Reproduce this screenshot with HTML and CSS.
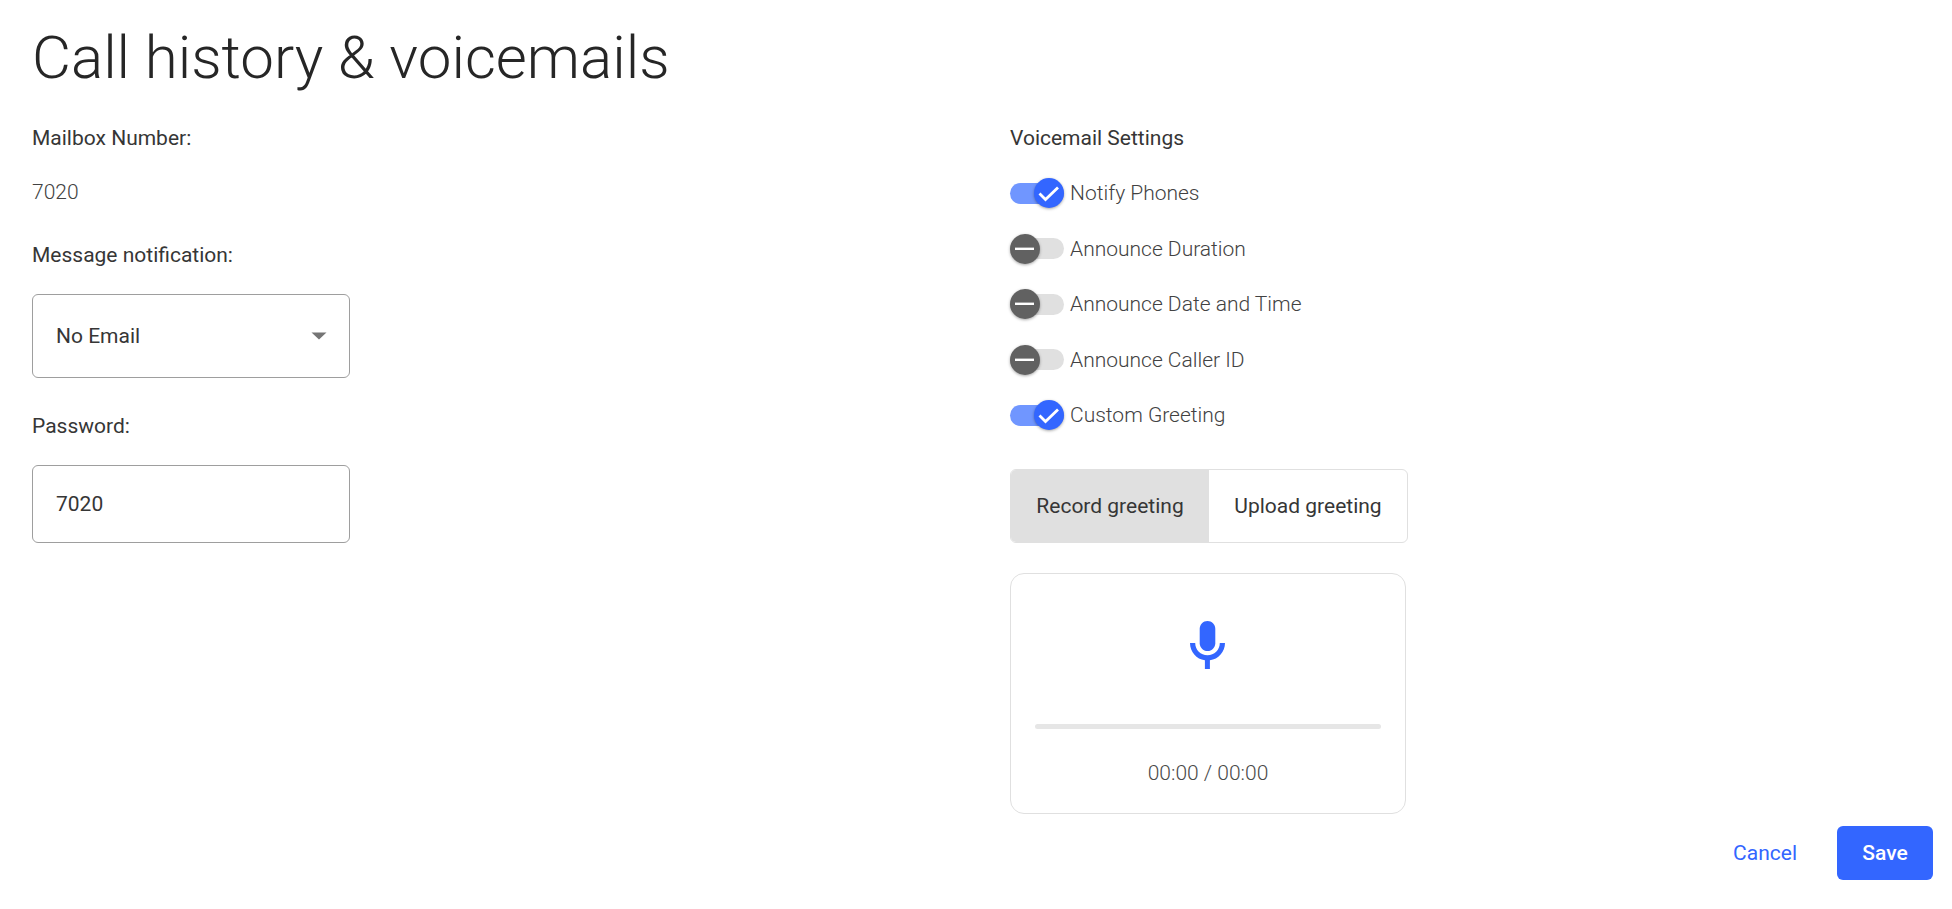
FILE: index.html
```html
<!DOCTYPE html>
<html lang="en">
<head>
<meta charset="utf-8">
<title>Call history &amp; voicemails</title>
<link rel="stylesheet" href="styles.css">
</head>
<body>
<main class="page">
  <h1 class="title">Call history &amp; voicemails</h1>
  <div class="columns">
    <section class="col-left">
      <div class="label">Mailbox Number:</div>
      <div class="static-value">7020</div>
      <div class="label label-notify">Message notification:</div>
      <div class="box box-select">
        <span>No Email</span>
        <svg class="caret" width="16" height="8" viewBox="0 0 16 8"><path d="M0.5 0.5H15.5L8 7.5Z" fill="#757575"/></svg>
      </div>
      <div class="label label-password">Password:</div>
      <div class="box box-input"><span>7020</span></div>
    </section>
    <section class="col-right">
      <div class="label">Voicemail Settings</div>
      <div class="toggles">
        <div class="toggle-row">
          <span class="switch on"><span class="thumb"><svg width="30" height="30" viewBox="0 0 30 30"><path d="M5.5 15.5L11.5 21.5L24 9.5" fill="none" stroke="#fff" stroke-width="2.8"/></svg></span></span>
          <span class="toggle-label">Notify Phones</span>
        </div>
        <div class="toggle-row">
          <span class="switch off"><span class="thumb"><svg width="30" height="30" viewBox="0 0 30 30"><path d="M5 14.8H24" fill="none" stroke="#fff" stroke-width="2.4"/></svg></span></span>
          <span class="toggle-label">Announce Duration</span>
        </div>
        <div class="toggle-row">
          <span class="switch off"><span class="thumb"><svg width="30" height="30" viewBox="0 0 30 30"><path d="M5 14.8H24" fill="none" stroke="#fff" stroke-width="2.4"/></svg></span></span>
          <span class="toggle-label">Announce Date and Time</span>
        </div>
        <div class="toggle-row">
          <span class="switch off"><span class="thumb"><svg width="30" height="30" viewBox="0 0 30 30"><path d="M5 14.8H24" fill="none" stroke="#fff" stroke-width="2.4"/></svg></span></span>
          <span class="toggle-label">Announce Caller ID</span>
        </div>
        <div class="toggle-row">
          <span class="switch on"><span class="thumb"><svg width="30" height="30" viewBox="0 0 30 30"><path d="M5.5 15.5L11.5 21.5L24 9.5" fill="none" stroke="#fff" stroke-width="2.8"/></svg></span></span>
          <span class="toggle-label">Custom Greeting</span>
        </div>
      </div>
      <div class="tabs">
        <div class="tab tab-active">Record greeting</div>
        <div class="tab tab-upload">Upload greeting</div>
      </div>
      <div class="recorder">
        <svg class="mic" width="35" height="48" viewBox="0 0 35 48"><path fill="#3366ff" d="M17.5 0C21.8 0 25.3 3.5 25.3 7.8V22.2C25.3 26.5 21.8 30 17.5 30C13.2 30 9.7 26.5 9.7 22.2V7.8C9.7 3.5 13.2 0 17.5 0Z"/><path fill="#3366ff" d="M0 22H5.2C5.2 28.8 10.7 34.3 17.5 34.3C24.3 34.3 29.8 28.8 29.8 22H35C35 30.9 28.3 38.2 19.9 39.3V48H14.9V39.3C6.5 38.2 0 30.9 0 22Z"/></svg>
        <div class="track"></div>
        <div class="time">00:00 / 00:00</div>
      </div>
    </section>
  </div>
  <footer class="actions">
    <span class="cancel">Cancel</span>
    <span class="save">Save</span>
  </footer>
</main>
</body>
</html>
```

FILE: styles.css
```css
* { box-sizing: border-box; }
html, body { margin: 0; padding: 0; background: #fff; }
body { font-family: Roboto, "Liberation Sans", sans-serif; color: #212121; overflow: hidden; }
.page { width: 1952px; height: 909px; display: flex; flex-direction: column; }
.title {
  margin: 0; padding: 22px 0 0 32px; height: 126px;
  font-size: 60px; line-height: 72px; font-weight: 300; color: #262626;
}
.columns { display: grid; grid-template-columns: 1010px 1fr; }
.col-left { padding-left: 32px; }
.col-right { width: 400px; }
.label { font-size: 21px; line-height: 24px; font-weight: 400; color: #363636; }
.static-value { margin-top: 30px; font-size: 21px; line-height: 24px; font-weight: 300; color: #424242; }
.label-notify { margin-top: 39px; }
.box {
  width: 318px; border: 1px solid #9e9e9e; border-radius: 6px; padding: 0 22px 0 23px;
  display: flex; align-items: center; justify-content: space-between;
  font-size: 21px; color: #363636;
}
.box-select { height: 84px; margin-top: 27px; }
.box-input { height: 78px; margin-top: 27px; }
.label-password { margin-top: 36px; }
.caret { display: block; }
.toggles { margin-top: 28px; display: flex; flex-direction: column; gap: 25.5px; }
.toggle-row { display: flex; align-items: center; height: 30px; }
.switch { position: relative; display: block; width: 54px; height: 21px; border-radius: 11px; flex: none; }
.switch.on { background: #7096ff; }
.switch.off { background: #e0e0e0; }
.thumb {
  position: absolute; top: -4.5px; width: 30px; height: 30px; border-radius: 50%;
  box-shadow: 0 1px 3px rgba(0,0,0,.35);
}
.thumb svg { display: block; }
.switch.on .thumb { right: 0; background: #3366ff; }
.switch.off .thumb { left: 0; background: #616161; }
.toggle-label { margin-left: 6px; font-size: 21px; line-height: 30px; font-weight: 300; color: #424242; }
.tabs {
  margin-top: 39px; width: 398px; height: 74px; display: flex;
  border: 1px solid #e0e0e0; border-radius: 6px; overflow: hidden;
}
.tab { flex: none; display: flex; align-items: center; justify-content: center; font-size: 21px; color: #363636; }
.tab-active { width: 198px; background: #e0e0e0; }
.tab-upload { width: 198px; }
.recorder {
  margin-top: 30px; width: 396px; height: 241px; border: 1px solid #e0e0e0; border-radius: 14px;
  padding: 47px 24px 0; display: flex; flex-direction: column; align-items: center;
}
.mic { display: block; flex: none; margin-right: 1px; }
.track { margin-top: 55px; width: 346px; height: 5px; border-radius: 3px; background: #e6e6e6; flex: none; }
.time { margin-top: 32px; font-size: 21px; line-height: 24px; font-weight: 300; color: #4a4a4a; }
.actions { margin-top: 12px; padding-right: 19px; display: flex; justify-content: flex-end; align-items: center; }
.cancel { font-size: 21px; color: #3366ff; margin-right: 40px; }
.save {
  width: 96px; height: 54px; border-radius: 6px; background: #3366ff; color: #fff;
  font-size: 21px; font-weight: 500; display: flex; align-items: center; justify-content: center;
}
```
